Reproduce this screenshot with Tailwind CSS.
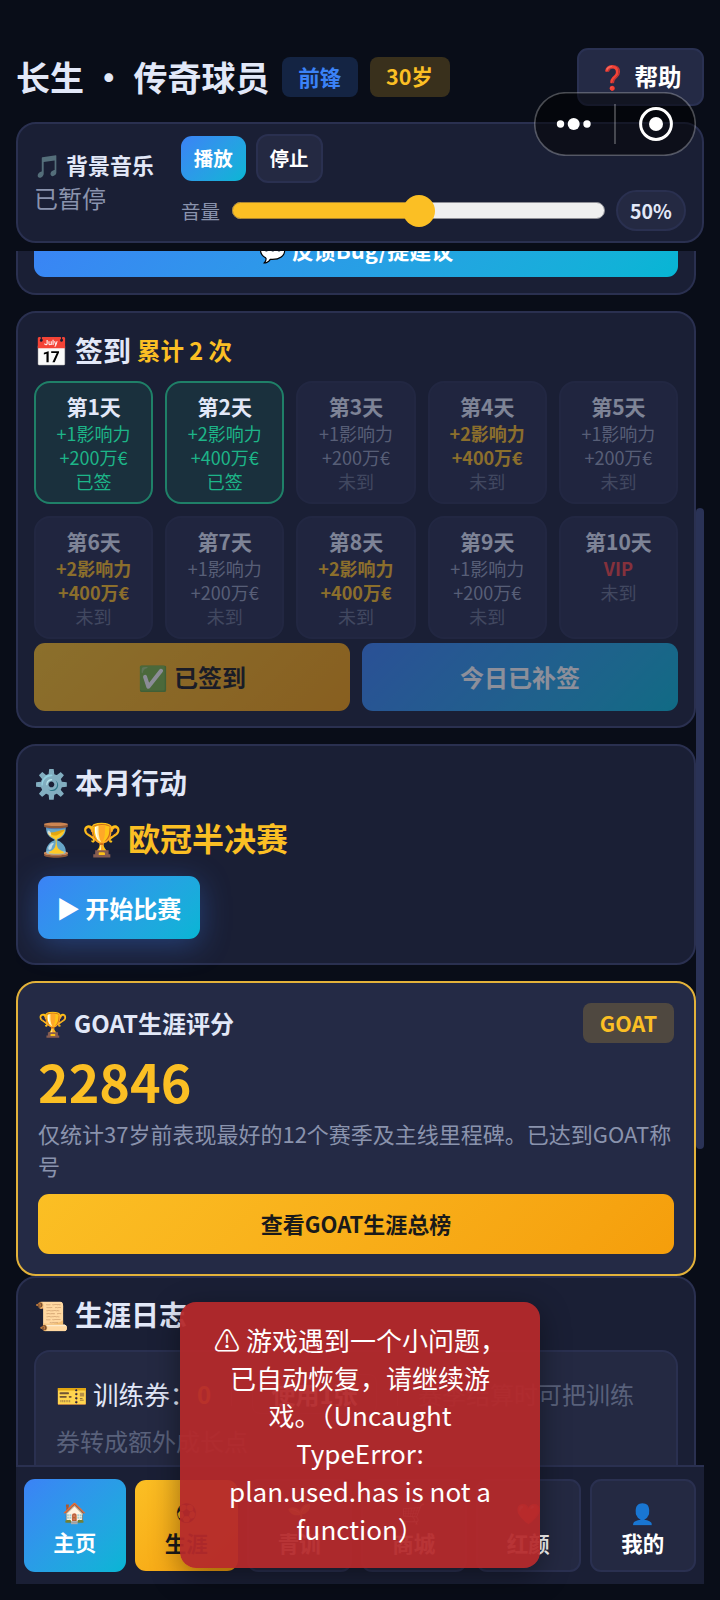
<!DOCTYPE html>
<html lang="zh-CN">
<head>
<meta charset="utf-8">
<title>长生 · 传奇球员</title>
<script src="https://cdn.jsdelivr.net/npm/@tailwindcss/browser@4"></script>
</head>
<body class="bg-[#090d18] text-[#e2e8f8] font-['Noto_Sans_CJK_SC',sans-serif]">
<div class="relative flex h-[1600px] w-[720px] flex-col overflow-hidden px-4 pt-12">

  <header class="flex h-[58px] shrink-0 items-center">
    <h1 class="w-[266px] whitespace-nowrap text-[34px] leading-[48px] font-bold">长生 · 传奇球员</h1>
    <span class="flex h-10 w-[75.5px] items-center justify-center rounded-lg bg-[#142443] text-[21.5px] font-bold text-[#3b82f6]">前锋</span>
    <span class="ml-3 flex h-10 w-20 items-center justify-center rounded-lg bg-[#39301c] pb-px text-[21.5px] font-bold text-[#fbbf24]">30岁</span>
    <button class="ml-auto flex h-[58px] w-[127px] items-center justify-center gap-1.5 rounded-[11px] border-2 border-[#2a3152] bg-[#242a45] text-[23.5px] font-bold whitespace-nowrap text-white"><span class="-translate-x-0.5">❓</span><span>帮助</span></button>
  </header>

  <section class="mt-4 flex h-[121px] shrink-0 rounded-[20px] border-2 border-[#2a3050] bg-[#1a1f35] pr-4 pl-4">
    <div class="flex w-[148px] flex-col justify-center pb-[2px] whitespace-nowrap">
      <div class="flex gap-1 text-[22px] leading-[33px] font-bold"><span>🎵</span><span class="pl-px">背景音乐</span></div>
      <div class="text-[24px] leading-[34px] text-[#8a93ad]">已暂停</div>
    </div>
    <div class="flex flex-1 flex-col">
      <div class="mt-[9px] flex h-[50px] items-center gap-[10px] text-[19.5px] font-bold text-white">
        <button class="h-[45px] w-[64.5px] rounded-[11px] bg-linear-135 from-[#3b82f6] to-[#06b6d4]">播放</button>
        <button class="h-[49px] w-[67px] rounded-[12px] border-2 border-[#2a3050] bg-[#242942]">停止</button>
      </div>
      <div class="mt-[7px] flex h-[41px] items-center">
        <span class="w-[51px] text-[19.5px] text-[#8a93ad]">音量</span>
        <div class="flex h-[17px] w-[373px] items-center rounded-full border border-[#8f8f96] bg-[#efefef]">
          <div class="-ml-px h-[17px] w-[182px] rounded-l-full border border-[#a98430] bg-[#fbbf24]"></div>
          <div class="-ml-[11px] size-[32px] shrink-0 rounded-full bg-[#fbbf24]"></div>
        </div>
        <span class="ml-[11px] flex h-[41px] w-[70px] items-center justify-center rounded-full border-2 border-[#2a3050] bg-[#242942] text-[19.5px] font-bold">50%</span>
      </div>
    </div>
  </section>

  <main class="mt-2 flex h-[1214px] shrink-0 flex-col overflow-hidden pr-2">
    <section class="flex h-[44px] shrink-0 flex-col justify-end overflow-hidden rounded-b-[20px] border-2 border-t-0 border-[#2a3050] bg-[#1a1f35] px-4 pb-4">
      <button class="flex h-[56px] shrink-0 items-center justify-center gap-1.5 rounded-[11px] bg-linear-135 from-[#3b82f6] to-[#06b6d4] text-[22px] font-bold text-white"><span>💬</span><span>反馈Bug/提建议</span></button>
    </section>

    <section class="mt-4 flex h-[417px] shrink-0 flex-col rounded-[20px] border-2 border-[#2a3050] bg-[#1a1f35] px-4">
      <h2 class="mt-[17px] flex h-10 items-center gap-1.5 text-[28px] font-bold whitespace-nowrap"><span>📅</span><span>签到</span><span class="pt-0.5 text-[23.5px] text-[#fbbf24]">累计 2 次</span></h2>
      <div id="days" class="mt-[11px] grid h-[258px] grid-cols-5 grid-rows-2 gap-3"></div>
      <div class="mt-1 grid h-[67.5px] grid-cols-2 gap-3 text-[24px] font-bold opacity-50">
        <button class="flex items-center justify-center gap-1.5 rounded-[11px] bg-linear-135 from-[#fbbf24] to-[#f59e0b] text-[#1a1a1a]"><span>✅</span><span>已签到</span></button>
        <button class="rounded-[11px] bg-linear-135 from-[#3b82f6] to-[#06b6d4] text-white">今日已补签</button>
      </div>
    </section>

    <section class="mt-4 flex h-[221px] shrink-0 flex-col rounded-[20px] border-2 border-[#2a3050] bg-[#1a1f35] px-4">
      <h2 class="mt-4 flex h-10 items-center gap-1.5 text-[28px] font-bold"><span>⚙️</span><span>本月行动</span></h2>
      <div class="mt-[11px] ml-0.5 flex h-12 items-center gap-1.5 text-[32px] font-bold text-[#fbbf24]"><span>⏳</span><span>🏆</span><span>欧冠半决赛</span></div>
      <button class="mt-[15px] ml-1 flex h-[63px] w-[161.5px] items-center justify-center gap-[5px] rounded-[11px] bg-linear-135 from-[#3b82f6] to-[#06b6d4] text-[24px] font-bold text-white shadow-[0_6px_30px_rgba(59,130,246,0.35)]"><span>▶</span><span>开始比赛</span></button>
    </section>

    <section class="mt-4 flex h-[295px] shrink-0 flex-col rounded-[20px] border-2 border-[#e3b23a] bg-[#242a45] px-5">
      <div class="mt-5 flex h-10 items-center justify-between">
        <h3 class="flex gap-1.5 text-[24px] font-bold"><span>🏆</span><span>GOAT生涯评分</span></h3>
        <span class="flex h-10 w-[91px] items-center justify-center rounded-lg bg-[#4f4840] text-[21.5px] font-bold text-[#fbbf24]">GOAT</span>
      </div>
      <div class="mt-1.5 h-[64px] text-[52px] leading-[64px] font-bold text-[#fbbf24]">22846</div>
      <p class="mt-[4px] -mr-1 text-[22px] leading-[32px] text-[#8a93ad]">仅统计37岁前表现最好的12个赛季及主线里程碑。已达到GOAT称号</p>
      <button class="mt-[13px] h-[60px] rounded-[11px] bg-linear-135 from-[#fbbf24] to-[#f59e0b] pb-0.5 text-[22px] font-bold text-[#1a1a1a]">查看GOAT生涯总榜</button>
    </section>

    <section class="flex h-[300px] shrink-0 flex-col rounded-[20px] border-2 border-[#2a3050] bg-[#1a1f35] px-4">
      <h2 class="mt-4 flex h-10 items-center gap-1.5 text-[28px] font-bold"><span>📜</span><span>生涯日志</span></h2>
      <div class="mt-[16px] h-[220px] rounded-[16px] border-2 border-[#2a3050] bg-[#242942] px-5 pt-[18px] text-[24px] leading-[47px] whitespace-nowrap text-[#59617b]">
        <div class="flex items-center">
          <span class="flex w-[138px] gap-[5px] text-[25.6px] text-[#e2e8f8]"><span>🎫</span><span>训练券：</span></span>
          <span class="ml-[3px] w-[34px] font-bold text-[#fbbf24]">0</span>
          <span class="mr-5 h-6 w-px bg-[#3a4163]"></span>
          <span class="flex h-[40px] w-[125px] items-center justify-center rounded-lg border border-[#343b5e] text-[#e2e8f8] font-bold">使用1张</span>
          <span class="mx-5 h-6 w-px bg-[#3a4163]"></span>
          <span>赛季结算时可把训练</span>
        </div>
        <div>券转成额外成长点</div>
      </div>
    </section>
  </main>

  <nav class="flex h-[119px] shrink-0 gap-[9px] border-t-2 border-[#2a3050] bg-[#1a1f35] pt-3 pr-2 pl-[7.5px] text-[21.5px] font-bold text-white">
    <a class="flex h-[93px] w-[102.5px] flex-col items-center rounded-[11px] bg-linear-135 from-[#3b82f6] to-[#06b6d4] pt-[18px]"><span class="text-[20px] leading-[29px]">🏠</span><span class="leading-[32px]">主页</span></a>
    <a class="mt-px flex h-[91px] w-[102.5px] flex-col items-center rounded-[11px] bg-linear-135 from-[#fbbf24] to-[#f59e0b] pt-[18px] text-[#1a1a1a]"><span class="text-[20px] leading-[29px]">⚽</span><span class="leading-[32px]">生涯</span></a>
    <a class="flex h-[93px] w-[105.5px] flex-col items-center rounded-[11px] border-2 border-[#2a3050] bg-[#242942] pt-[17px]"><span class="text-[20px] leading-[29px]">🌱</span><span class="leading-[32px]">青训</span></a>
    <a class="flex h-[93px] w-[105.5px] flex-col items-center rounded-[11px] border-2 border-[#2a3050] bg-[#242942] pt-[17px]"><span class="text-[20px] leading-[29px]">🛒</span><span class="leading-[32px]">商城</span></a>
    <a class="flex h-[93px] w-[105.5px] flex-col items-center rounded-[11px] border-2 border-[#2a3050] bg-[#242942] pt-[17px]"><span class="text-[20px] leading-[29px]">❤️</span><span class="leading-[32px]">红颜</span></a>
    <a class="flex h-[93px] w-[105.5px] flex-col items-center rounded-[11px] border-2 border-[#2a3050] bg-[#242942] pt-[17px]"><span class="text-[20px] leading-[29px]">👤</span><span class="leading-[32px]">我的</span></a>
  </nav>

  <!-- Scrollbar thumb -->
  <div class="absolute top-[508px] left-[696px] h-[641px] w-2 rounded-full bg-[#2a3256]"></div>

  <!-- Mini-program capsule -->
  <div class="absolute top-[92px] left-[534px] h-16 w-[162px]">
    <svg width="162" height="64" viewBox="0 0 162 64" fill="none">
      <rect x="0.75" y="0.75" width="160.5" height="62.5" rx="31.25" fill="#000" fill-opacity=".5" stroke="#fff" stroke-opacity=".27" stroke-width="1.6"/>
      <circle cx="26.5" cy="32" r="3.7" fill="#fff"/><circle cx="39.7" cy="32" r="6" fill="#fff"/><circle cx="53" cy="32" r="3.7" fill="#fff"/>
      <path d="M81 12v40" stroke="#fff" stroke-opacity=".27" stroke-width="1.8"/>
      <circle cx="122" cy="32" r="15.4" stroke="#fff" stroke-width="3"/><circle cx="122" cy="32" r="7" fill="#fff"/>
    </svg>
  </div>

  <!-- Error toast -->
  <div class="absolute top-[1302px] left-[180px] h-[266px] w-[360px] rounded-[16px] bg-[#b4292b]/95 pt-[19px] text-center text-[26px] leading-[37.7px] text-white shadow-[0_8px_30px_rgba(0,0,0,0.4)]">⚠︎ 游戏遇到一个小问题，<br>已自动恢复，请继续游<br>戏。（Uncaught<br>TypeError:<br>plan.used.has is not a<br>function）</div>
</div>

<script>
  const tones = {
    done: 'text-[#1db588]',
    plain: 'text-[#959eb8]',
    gold: 'text-[#fbbf24] font-bold',
    vip: 'text-[#ef4444] font-bold'
  };
  const days = [
    ['+1影响力', '+200万€', 'done'], ['+2影响力', '+400万€', 'done'], ['+1影响力', '+200万€', 'plain'],
    ['+2影响力', '+400万€', 'gold'], ['+1影响力', '+200万€', 'plain'], ['+2影响力', '+400万€', 'gold'],
    ['+1影响力', '+200万€', 'plain'], ['+2影响力', '+400万€', 'gold'], ['+1影响力', '+200万€', 'plain'],
    ['VIP', '', 'vip']
  ];
  document.getElementById('days').innerHTML = days.map(([a, b, t], i) => {
    const done = t === 'done';
    const box = done ? 'border-[#1f8068] bg-[#1a303d]' : 'border-[#2a3050] bg-[#262b49] opacity-50';
    const rest = done ? 'text-[#1db588]' : 'text-[#69718c]';
    return `<div class="flex h-[123px] flex-col items-center rounded-[16px] border-2 pt-[10px] text-[18px] leading-[24.2px] whitespace-nowrap ${box}">
      <b class="pb-[2px] text-[21px] leading-[26px]">第${i + 1}天</b>
      <span class="${tones[t]}">${a}</span>${b ? `<span class="${tones[t]}">${b}</span>` : ''}
      <span class="${rest}">${done ? '已签' : '未到'}</span></div>`;
  }).join('');
</script>
</body>
</html>
